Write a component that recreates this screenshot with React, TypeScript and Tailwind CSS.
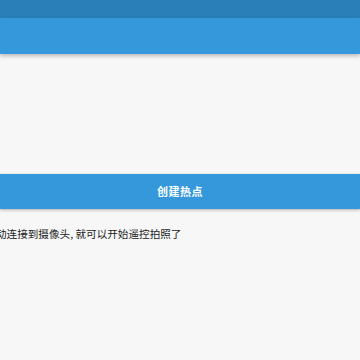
export default function App() {
  const font = { fontFamily: '"Noto Sans CJK SC", Roboto, sans-serif' };
  return (
    <div className="w-[360px] h-[360px] overflow-hidden bg-[#f7f7f7] flex flex-col" style={font}>
      <div className="h-[18px] bg-[#2a7fb8] shrink-0" />
      <div className="h-[36px] bg-[#3598db] shrink-0 shadow-[0_2px_4px_rgba(0,0,0,0.25)] relative z-10" />
      <div className="h-[120px] shrink-0" />
      <div className="h-[35px] bg-[#3598db] shrink-0 flex items-center justify-center shadow-[0_1px_3px_rgba(0,0,0,0.3)]">
        <span className="text-white text-[11px] font-bold tracking-[0.5px]">创建热点</span>
      </div>
      <div className="mt-[17px] -ml-[4px] whitespace-nowrap text-[10.6px] leading-[15px] text-[#222]">
        动连接到摄像头, 就可以开始遥控拍照了
      </div>
    </div>
  );
}
